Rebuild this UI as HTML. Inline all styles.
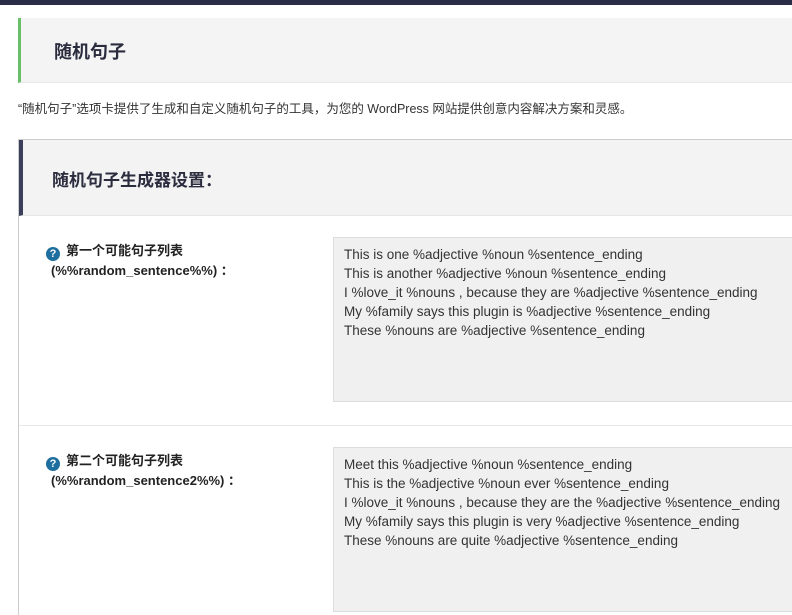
<!DOCTYPE html>
<html style="width:792px;height:615px;overflow:hidden"><head><meta charset="utf-8"><style>
html,body{margin:0;width:792px;height:615px;overflow:hidden}
body{background:#fff;font-family:"Liberation Sans","Noto Sans CJK SC",sans-serif;color:#23282d;position:relative}
.top{position:absolute;left:0;top:0;width:792px;height:5px;background:#2b2c46}
.h1{position:absolute;left:18px;top:18px;width:774px;height:65px;background:#f4f4f4;border-left:3px solid #6abf69;box-sizing:border-box;border-bottom:1px solid #e8e8e8}
.h1 span{position:absolute;left:33px;top:20px;font-size:18px;font-weight:bold;color:#2b2d3f}
.desc{position:absolute;left:18px;top:98px;font-size:12.5px;color:#333}
.box{position:absolute;left:18px;top:139px;width:774px;height:476px;border:1px solid #ccc;border-right:none;border-bottom:none;box-sizing:border-box}
.bh{position:absolute;left:0;top:0;right:0;height:76px;background:#f3f3f3;border-left:4px solid #3c3f5c;box-sizing:border-box;border-bottom:1px solid #e6e6e6}
.bh span{position:absolute;left:29px;top:26px;font-size:17px;font-weight:bold;color:#2b2d3f}
.lab{position:absolute;font-size:13px;font-weight:bold;color:#222;line-height:20px}
.q{display:inline-block;width:14px;height:14px;border-radius:50%;background:#1e6fa0;color:#fff;font-size:11px;text-align:center;line-height:14px;vertical-align:-2px;margin-right:6px}
.ta{position:absolute;left:333px;width:459px;height:165px;background:#f0f0f0;border:1px solid #ddd;border-right:none;box-sizing:border-box;padding:7px 10px;font-size:13.5px;line-height:19px;color:#333;white-space:pre;overflow:hidden}
.sep{position:absolute;left:19px;top:425px;width:773px;height:1px;background:#e8e8e8}
</style></head><body>
<div class="top"></div>
<div class="h1"><span>随机句子</span></div>
<div class="desc">“随机句子”选项卡提供了生成和自定义随机句子的工具，为您的 WordPress 网站提供创意内容解决方案和灵感。</div>
<div class="box"><div class="bh"><span>随机句子生成器设置：</span></div></div>
<div class="lab" style="left:46px;top:241px"><span class="q">?</span>第一个可能句子列表<br><span style="margin-left:5px">(%%random_sentence%%) ：</span></div>
<div class="ta" style="top:237px">This is one %adjective %noun %sentence_ending
This is another %adjective %noun %sentence_ending
I %love_it %nouns , because they are %adjective %sentence_ending
My %family says this plugin is %adjective %sentence_ending
These %nouns are %adjective %sentence_ending</div>
<div class="sep"></div>
<div class="lab" style="left:46px;top:451px"><span class="q">?</span>第二个可能句子列表<br><span style="margin-left:5px">(%%random_sentence2%%) ：</span></div>
<div class="ta" style="top:447px;height:165px">Meet this %adjective %noun %sentence_ending
This is the %adjective %noun ever %sentence_ending
I %love_it %nouns , because they are the %adjective %sentence_ending
My %family says this plugin is very %adjective %sentence_ending
These %nouns are quite %adjective %sentence_ending</div>
</body></html>
